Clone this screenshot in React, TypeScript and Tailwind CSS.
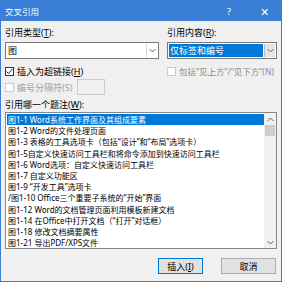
import { useState } from "react";

const captions = [
    "图1-1 Word系统工作界面及其组成要素",
    "图1-2 Word的文件处理页面",
    "图1-3 表格的工具选项卡（包括“设计”和“布局”选项卡）",
    "图1-5自定义快速访问工具栏和将命令添加到快速访问工具栏",
    "图1-6 Word选项：自定义快速访问工具栏",
    "图1-7 自定义功能区",
    "图1-9 “开发工具”选项卡",
    "/图1-10 Office三个重要子系统的“开始”界面",
    "图1-12 Word的文档管理页面利用模板新建文档",
    "图1-14 在Office中打开文档（“打开”对话框）",
    "图1-18 修改文档摘要属性",
    "图1-21 导出PDF/XPS文件",
];

function Chevron({ up = false }: { up?: boolean }) {
    return (
        <svg width="7" height="5" viewBox="0 0 7 5" className={up ? "rotate-180" : ""}>
            <path d="M0.5 1 L3.5 4 L6.5 1" fill="none" stroke="#606060" strokeWidth="1" />
        </svg>
    );
}

function CheckBox({ checked, disabled }: { checked?: boolean; disabled?: boolean }) {
    return (
        <div className={`w-[9px] h-[9px] bg-white border flex items-center justify-center shrink-0 ${disabled ? "border-[#cccccc]" : "border-[#333333]"}`}>
            {checked && (
                <svg width="7" height="7" viewBox="0 0 7 7">
                    <path d="M0.5 3.5 L2.5 5.5 L6.5 0.8" fill="none" stroke="#222" strokeWidth="1" />
                </svg>
            )}
        </div>
    );
}

export default function App() {
    const [selected, setSelected] = useState(0);

    return (
        <div
            className="w-[282px] h-[282px] flex flex-col border border-[#3a7fd5] bg-[#f0f0f0] text-[9px] leading-[11px] text-black overflow-hidden"
            style={{ fontFamily: '"Noto Sans", "Noto Sans CJK SC", sans-serif' }}
        >
            {/* title bar */}
            <div className="h-[20px] bg-[#3a7fd5] flex items-center text-white shrink-0">
                <span className="pl-[4px] text-[8.5px]">交叉引用</span>
                <span className="ml-auto mr-[29px] text-[9px]">?</span>
                <span className="mr-[12px] text-[11px] font-light">✕</span>
            </div>

            <div className="flex flex-col px-[4px]">
                {/* type + content */}
                <div className="flex mt-[6px] gap-[8px]">
                    <div className="flex flex-col w-[154px]">
                        <span>引用类型(<u>T</u>):</span>
                        <div className="mt-[4px] h-[17px] bg-white border border-[#7a7a7a] flex items-center">
                            <span className="pl-[2px] flex-1">图</span>
                            <div className="w-[12px] h-full border-l border-[#dcdcdc] flex items-center justify-center">
                                <Chevron />
                            </div>
                        </div>
                    </div>
                    <div className="flex flex-col flex-1">
                        <span>引用内容(<u>R</u>):</span>
                        <div className="mt-[4px] h-[17px] bg-white border border-[#7a7a7a] flex items-center p-[1px]">
                            <span className="flex-1 h-full bg-[#0078d7] text-white pl-[1px] flex items-center">仅标签和编号</span>
                            <div className="w-[11px] h-full ml-[1px] bg-[#e5e5e5] border-l border-[#b9b9b9] flex items-center justify-center">
                                <Chevron />
                            </div>
                        </div>
                    </div>
                </div>

                {/* checkboxes */}
                <div className="flex mt-[7px] h-[11px] items-center">
                    <div className="flex items-center gap-[3px] w-[162px]">
                        <CheckBox checked />
                        <span>插入为超链接(<u>H</u>)</span>
                    </div>
                    <div className="flex items-center gap-[3px] text-[#8a8a8a] whitespace-nowrap text-[8.5px]">
                        <CheckBox disabled />
                        <span>包括“见上方”/“见下方”(N)</span>
                    </div>
                </div>
                <div className="flex mt-[2px] h-[16px] items-center">
                    <div className="flex items-center gap-[3px] w-[72px] text-[#a0a0a0] whitespace-nowrap">
                        <CheckBox disabled />
                        <span>编号分隔符(S)</span>
                    </div>
                    <div className="w-[28px] h-[16px] border border-[#cccccc] bg-[#f0f0f0]" />
                </div>

                <span className="mt-[4px]">引用哪一个题注(<u>W</u>):</span>

                {/* caption list */}
                <div className="mt-[2px] h-[137px] bg-white border border-[#828790] flex">
                    <div className="flex-1 flex flex-col pt-[1px] pl-[1px] overflow-hidden text-[8px] leading-[11px] gap-[0.2px]">
                        {captions.map((c, i) => (
                            <div
                                key={c}
                                onClick={() => setSelected(i)}
                                className={`h-[11px] pl-[1px] whitespace-nowrap ${i === selected ? "bg-[#0078d7] text-white" : ""}`}
                            >
                                {c}
                            </div>
                        ))}
                    </div>
                    <div className="w-[12px] bg-[#f0f0f0] flex flex-col items-center">
                        <div className="h-[12px] flex items-center justify-center">
                            <Chevron up />
                        </div>
                        <div className="w-[10px] h-[11px] bg-[#cdcdcd]" />
                        <div className="mt-auto h-[12px] flex items-center justify-center">
                            <Chevron />
                        </div>
                    </div>
                </div>

                {/* buttons */}
                <div className="flex justify-end gap-[18px] mt-[9px] mr-[1px]">
                    <button className="w-[45px] h-[16px] bg-[#e1e1e1] border border-[#0078d7] text-[9px] leading-none">
                        插入(<u>I</u>)
                    </button>
                    <button className="w-[55px] h-[16px] bg-[#e1e1e1] border border-[#adadad] text-[9px] leading-none">
                        取消
                    </button>
                </div>
            </div>
        </div>
    );
}
